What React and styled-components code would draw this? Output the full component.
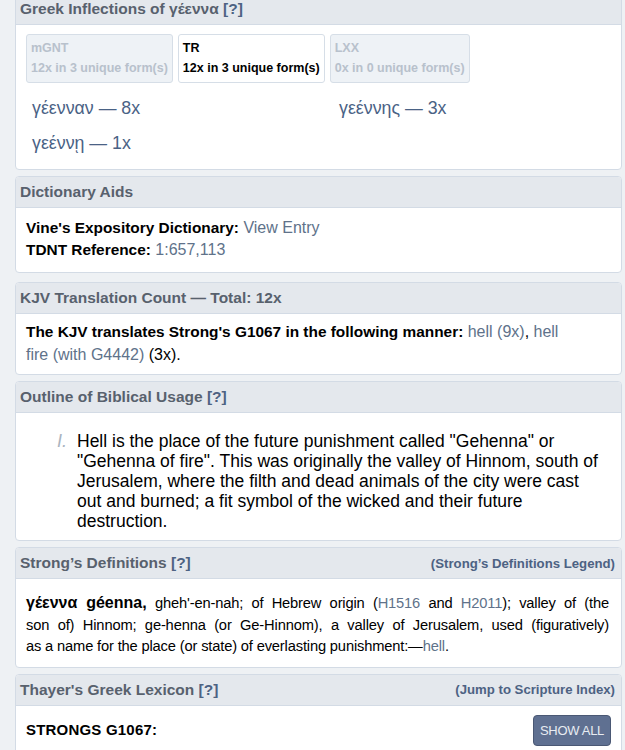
import React from "react";
import styled, { createGlobalStyle } from "styled-components";

const GlobalStyle = createGlobalStyle`
  html, body {
    margin: 0;
    padding: 0;
    background: #eef1f4;
    font-family: "Liberation Sans", Arial, sans-serif;
    overflow: hidden;
  }
`;

const Page = styled.div`
  margin-top: -7px;
  padding: 0 3px 0 15px;
  display: flex;
  flex-direction: column;
  gap: 6px;
`;

const Panel = styled.section`
  margin-top: ${(p) => p.$mt || "0"};
  background: #fff;
  border: 1px solid #d3dbe5;
  border-radius: 4px;
  overflow: hidden;
`;

const Header = styled.div`
  display: flex;
  align-items: center;
  justify-content: space-between;
  height: 30px;
  padding: 0 6px 0 4px;
  background: #e4e8ed;
  border-bottom: 1px solid #d3dbe5;
`;

const Title = styled.h3`
  margin: 0;
  font-size: 15.5px;
  font-weight: bold;
  color: #58616d;
`;

const Help = styled.span`
  color: #4d6283;
`;

const HeaderLink = styled.a`
  font-size: 13.2px;
  font-weight: bold;
  color: #4d6283;
  text-decoration: none;
`;

const Body = styled.div`
  padding: ${(p) => p.$pad || "9px 10px 11px"};
  font-size: 16px;
  line-height: ${(p) => p.$lh || "22px"};
  color: #000;
`;

const Tabs = styled.div`
  display: flex;
  gap: 5px;
`;

const Tab = styled.div`
  padding: 3px 4px 4px;
  border: 1px solid #d6dee7;
  border-radius: 3px;
  background: ${(p) => (p.$active ? "#fff" : "#eef2f6")};
  color: ${(p) => (p.$active ? "#000" : "#b8c1cc")};
  font-size: 12.5px;
  font-weight: bold;
  line-height: 20px;
`;

const Forms = styled.div`
  display: grid;
  grid-template-columns: 307px 1fr;
  row-gap: 14px;
  padding: 15px 0 5px 6px;
`;

const Form = styled.div`
  font-size: 17.8px;
  line-height: 21px;
  color: #4a6285;
`;

const Label = styled.b`
  font-weight: bold;
  font-size: ${(p) => p.$fs || "15.4px"};
  letter-spacing: 0;
`;

const Link = styled.a`
  color: #60728a;
  text-decoration: none;
`;

const Outline = styled.ol`
  margin: 0;
  padding: 0 0 0 31px;
  list-style: none;
`;

const OutlineItem = styled.li`
  display: flex;
  gap: 10px;
  font-size: 17.5px;
  line-height: 20px;
  max-width: 545px;
`;

const Numeral = styled.span`
  flex: none;
  width: 10px;
  text-align: right;
  font-style: italic;
  color: #aab4c0;
  font-size: 18px;
`;

const Definition = styled.p`
  margin: 0;
  font-size: 14.7px;
  letter-spacing: -0.16px;
  line-height: 21.5px;
`;

const JustifiedLine = styled.span`
  display: block;
  text-align: justify;
  text-align-last: justify;
`;

const Row = styled.div`
  display: flex;
  align-items: center;
  justify-content: space-between;
`;

const Strongs = styled.b`
  font-size: 15px;
  letter-spacing: 0.2px;
`;

const Button = styled.button`
  height: 31px;
  padding: 0 6px;
  background: #5f7091;
  border: 1px solid #4a5874;
  border-radius: 4px;
  color: #e8ecf2;
  font-family: "Liberation Sans", Arial, sans-serif;
  font-size: 13px;
  letter-spacing: -0.3px;
`;

export default function App() {
  return (
    <>
      <GlobalStyle />
      <Page>
        <Panel>
          <Header>
            <Title>
              Greek Inflections of γέεννα <Help>[?]</Help>
            </Title>
          </Header>
          <Body $pad="9px 10px 10px 10px">
            <Tabs>
              <Tab>
                mGNT
                <br />
                12x in 3 unique form(s)
              </Tab>
              <Tab $active>
                TR
                <br />
                12x in 3 unique form(s)
              </Tab>
              <Tab>
                LXX
                <br />
                0x in 0 unique form(s)
              </Tab>
            </Tabs>
            <Forms>
              <Form>γέενναν — 8x</Form>
              <Form>γεέννης — 3x</Form>
              <Form>γεέννῃ — 1x</Form>
            </Forms>
          </Body>
        </Panel>

        <Panel>
          <Header>
            <Title>Dictionary Aids</Title>
          </Header>
          <Body>
            <div>
              <Label>Vine's Expository Dictionary:</Label> <Link>View Entry</Link>
            </div>
            <div>
              <Label>TDNT Reference:</Label> <Link>1:657,113</Link>
            </div>
          </Body>
        </Panel>

        <Panel $mt="3px">
          <Header>
            <Title>KJV Translation Count — Total: 12x</Title>
          </Header>
          <Body $pad="7px 50px 8px 10px" $lh="22.5px">
            <Label>The KJV translates Strong's G1067 in the following manner:</Label>{" "}
            <Link>hell (9x)</Link>, <Link>hell fire (with G4442)</Link> (3x).
          </Body>
        </Panel>

        <Panel>
          <Header>
            <Title>
              Outline of Biblical Usage <Help>[?]</Help>
            </Title>
          </Header>
          <Body $pad="18px 10px 9px 10px">
            <Outline>
              <OutlineItem>
                <Numeral>I.</Numeral>
                <span>
                  Hell is the place of the future punishment called "Gehenna" or
                  "Gehenna of fire". This was originally the valley of Hinnom, south of
                  Jerusalem, where the filth and dead animals of the city were cast out
                  and burned; a fit symbol of the wicked and their future destruction.
                </span>
              </OutlineItem>
            </Outline>
          </Body>
        </Panel>

        <Panel>
          <Header>
            <Title>
              Strong’s Definitions <Help>[?]</Help>
            </Title>
            <HeaderLink>(Strong’s Definitions Legend)</HeaderLink>
          </Header>
          <Body $pad="13px 12px 9px 10px">
            <Definition>
              <JustifiedLine>
                <Label $fs="16px">γέεννα géenna,</Label> gheh'-en-nah; of Hebrew origin
                (<Link>H1516</Link> and <Link>H2011</Link>); valley of (the
              </JustifiedLine>
              <JustifiedLine>
                son of) Hinnom; ge-henna (or Ge-Hinnom), a valley of Jerusalem, used
                (figuratively)
              </JustifiedLine>
              as a name for the place (or state) of everlasting punishment:—<Link>hell</Link>.
            </Definition>
          </Body>
        </Panel>

        <Panel>
          <Header>
            <Title>
              Thayer's Greek Lexicon <Help>[?]</Help>
            </Title>
            <HeaderLink>(Jump to Scripture Index)</HeaderLink>
          </Header>
          <Body $pad="9px 10px 10px 10px">
            <Row>
              <Strongs>STRONGS G1067:</Strongs>
              <Button>SHOW ALL</Button>
            </Row>
          </Body>
        </Panel>
      </Page>
    </>
  );
}
